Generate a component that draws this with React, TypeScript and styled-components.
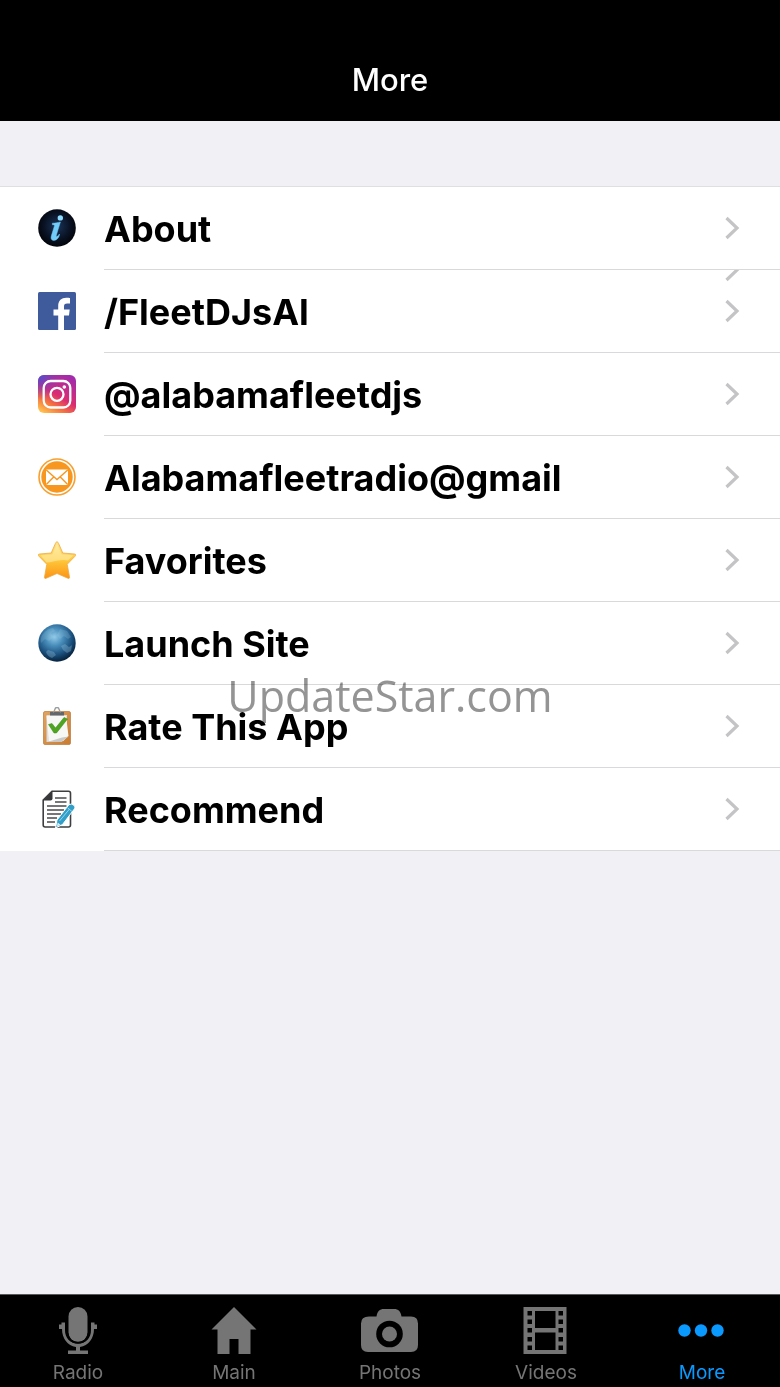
import React from "react";
import styled, { createGlobalStyle } from "styled-components";

const GlobalStyle = createGlobalStyle`
  *, *::before, *::after { box-sizing: border-box; }
  body {
    margin: 0;
    background: #f0f0f5;
    font-family: Inter, "Liberation Sans", sans-serif;
  }
`;

const Screen = styled.div`
  position: relative;
  display: flex;
  flex-direction: column;
  min-height: 100vh;
  background: #f0f0f5;
`;

const Header = styled.header`
  display: flex;
  justify-content: center;
  padding: 60px 16px 21px;
  background: #000;
`;

const Title = styled.h1`
  margin: 0;
  color: #fff;
  font-size: 31px;
  line-height: 40px;
  font-weight: 500;
`;

const Content = styled.main`
  flex: 1;
  padding-top: 65px;
`;

const Menu = styled.ul`
  margin: 0;
  padding: 0;
  list-style: none;
  background: #fff;
  border-top: 1px solid #dfdfe2;
`;

const Row = styled.li`
  position: relative;
`;

const RowLink = styled.a`
  display: flex;
  align-items: stretch;
  gap: 28px;
  height: 83px;
  padding-left: 38px;
  color: #000;
  text-decoration: none;
`;

const RowIcon = styled.svg`
  flex: none;
  margin-top: 22px;
  width: 38px;
  height: 38px;
`;

const RowBody = styled.span`
  display: flex;
  flex: 1;
  align-items: center;
  justify-content: space-between;
  min-width: 0;
  padding-right: 40px;
  border-bottom: 1px solid #d9d9db;
`;

const RowLabel = styled.span`
  padding-top: 2px;
  font-size: 36px;
  line-height: 48px;
  font-weight: 700;
`;

const ChevronIcon = styled.svg`
  flex: none;
  width: 16px;
  height: 24px;
`;

const Leftover = styled.span`
  position: absolute;
  top: 0;
  right: 40px;
  height: 12px;
  overflow: hidden;
  display: flex;
  align-items: flex-end;
`;

const TabBar = styled.nav`
  display: grid;
  grid-template-columns: repeat(5, 1fr);
  border-top: 1px solid #58585a;
  background: #000;
`;

const Tab = styled.a<{ $active?: boolean }>`
  display: flex;
  flex-direction: column;
  align-items: center;
  gap: 5px;
  height: 92px;
  padding-top: 11px;
  color: ${(p) => (p.$active ? "#0a99ff" : "#757575")};
  font-size: 19px;
  line-height: 24px;
  text-decoration: none;
`;

const TabIcon = styled.svg`
  width: 60px;
  height: 50px;
  fill: currentColor;
`;

const Watermark = styled.div`
  position: absolute;
  inset: 0;
  display: flex;
  align-items: center;
  justify-content: center;
  padding-top: 4px;
  color: #949494;
  font-family: "Open Sans", "Noto Sans", sans-serif;
  font-size: 43px;
  line-height: 60px;
  mix-blend-mode: multiply;
  pointer-events: none;
`;

const Chevron = () => (
  <ChevronIcon viewBox="0 0 16 24" aria-hidden="true">
    <path d="M2.5 2L13 12L2.5 22" fill="none" stroke="#c4c4c6" strokeWidth="3.2" />
  </ChevronIcon>
);

const AboutArt = () => (
  <>
    <defs>
      <radialGradient id="about" cx=".5" cy=".45" r=".55">
        <stop offset="0" stopColor="#1b3358" />
        <stop offset=".6" stopColor="#0a1426" />
        <stop offset="1" stopColor="#020408" />
      </radialGradient>
    </defs>
    <circle cx="19" cy="19" r="18.8" fill="url(#about)" />
    <ellipse cx="22.3" cy="8.9" rx="2.7" ry="2.7" fill="#8bdcff" />
    <path
      d="M14.4 14.2C17 14.5 19.500 13.500 22.400 13C21 17.500 19.300 23 18 27.400C19 27.800 20.500 26.500 21.500 25C21.500 28.500 18.500 31.500 15.800 31.400C12.600 31.300 12.800 28.500 13.600 26L16.600 16.400C16.200 15.700 15.300 15.700 14.400 15.800Z"
      fill="#72ccfa"
      stroke="#72ccfa"
      strokeWidth=".5"
    />
  </>
);

const FacebookArt = () => (
  <>
    <rect width="38" height="38" rx="1.5" fill="#3f5b9c" />
    <path
      d="M20.200 38V23.500H15.500V17.500H20.200V14C20.200 8.600 23.500 5.800 28.300 5.800C30 5.800 31.300 5.900 32 6V11.500H29.200C26.700 11.500 26 12.700 26 14.700V17.500H31.700L31 23.500H26V38Z"
      fill="#fff"
    />
  </>
);

const InstagramArt = () => (
  <>
    <defs>
      <linearGradient id="igBase" x1=".15" y1="1" x2=".75" y2="0">
        <stop offset="0" stopColor="#ffc24f" />
        <stop offset=".25" stopColor="#f5753f" />
        <stop offset=".5" stopColor="#db2c70" />
        <stop offset="1" stopColor="#a22cab" />
      </linearGradient>
      <radialGradient id="igBlue" cx="0" cy="0" r=".65">
        <stop offset="0" stopColor="#3f55d4" />
        <stop offset="1" stopColor="#7a35c8" stopOpacity="0" />
      </radialGradient>
    </defs>
    <rect width="38" height="38" rx="6" fill="url(#igBase)" />
    <rect width="38" height="38" rx="6" fill="url(#igBlue)" />
    <g fill="none" stroke="#fff" strokeWidth="2.300">
      <rect x="5.700" y="6" width="26.600" height="26.500" rx="7" />
      <circle cx="19" cy="19.300" r="6.500" />
    </g>
    <circle cx="26.300" cy="12" r="1.800" fill="#fff" />
  </>
);

const MailArt = () => (
  <>
    <circle cx="19" cy="19" r="18" fill="#fff" stroke="#f7a02f" strokeWidth="1.600" />
    <circle cx="19" cy="19" r="15.700" fill="#f7971f" />
    <rect x="8" y="11.500" width="22" height="15.500" rx="1" fill="#fff" />
    <path
      d="M8.300 12L19 21.500L29.700 12M8.300 26.500L15.700 19M29.700 26.500L22.300 19"
      fill="none"
      stroke="#f7971f"
      strokeWidth="1.400"
    />
  </>
);

const StarArt = () => (
  <>
    <defs>
      <linearGradient id="star" x1="0" y1="0" x2="0" y2="1">
        <stop offset="0" stopColor="#ffe58c" />
        <stop offset=".5" stopColor="#ffc83b" />
        <stop offset="1" stopColor="#fb9314" />
      </linearGradient>
    </defs>
    <path
      d="M19 .8C19.700 .8 20.200 1.500 20.600 2.500L24.800 12L36.500 13C38 13.200 38 14.300 37 15.300L29.200 23.300L31.500 36C31.700 37.400 30.900 37.800 29.800 37.200L19 32.500L8.200 37.200C7.100 37.800 6.300 37.400 6.500 36L8.800 23.300L1 15.300C0 14.300 0 13.200 1.500 13L13.200 12L17.400 2.500C17.800 1.500 18.300 .8 19 .8Z"
      fill="url(#star)"
      stroke="#edaa43"
      strokeWidth=".8"
    />
    <path
      d="M19 2.500L23.700 13.200L35.500 14.300L30 19.500C22 17.500 14 21.500 8.500 21.500L2.500 14.300L14.300 13.200Z"
      fill="#fff4bd"
      opacity=".5"
    />
  </>
);

const GlobeArt = () => (
  <>
    <defs>
      <radialGradient id="globe" cx=".43" cy=".34" r=".65">
        <stop offset="0" stopColor="#93cbe9" />
        <stop offset=".35" stopColor="#4a8fbc" />
        <stop offset=".72" stopColor="#1c5280" />
        <stop offset="1" stopColor="#082541" />
      </radialGradient>
    </defs>
    <circle cx="19" cy="19" r="18.700" fill="url(#globe)" />
    <path
      d="M5 10C8 6 12 4 15 4L17 7L13 9L15 13L11 17L7 15L3 19C2 16 3 12 5 10ZM22 5L29 7L33 13L30 15L26 12L22 15L19 11Z"
      fill="#b5ddee"
      opacity=".18"
    />
    <path
      d="M10 26L16 28L18 31L14 34C11 33 9 31 8 28ZM23 22L27 20L31 23L34 21L33 27L29 29L25 26Z"
      fill="#9ac8df"
      opacity=".32"
    />
  </>
);

const ClipboardArt = () => (
  <>
    <defs>
      <linearGradient id="board" x1="0" y1="0" x2="1" y2="1">
        <stop offset="0" stopColor="#e1a45f" />
        <stop offset="1" stopColor="#c97b31" />
      </linearGradient>
    </defs>
    <rect x="5.500" y="4.500" width="27" height="33" rx="1.500" fill="url(#board)" stroke="#b9793b" strokeWidth=".7" />
    <path d="M8.500 8H29L28.500 30L25.500 34L8.500 35Z" fill="#dededd" />
    <path d="M8.500 9L28 9L30.500 29L24 34.500L11 34Z" fill="#f7f7f6" />
    <path d="M11 34.500L23 35L30.500 29.500L24 30.500Z" fill="#c9c9c7" />
    <path d="M12 5H26V8.500H12Z" fill="#63676a" />
    <path d="M15 5C16.500 5 16.500 3.500 17 2C17.500 0 20.500 0 21 2C21.500 3.500 21.500 5 23 5" fill="none" stroke="#9b9fa2" strokeWidth="1.500" />
    <path d="M10.500 17.500L14 16.500L17.500 21L26 10.500L29.500 12L18.500 26H16Z" fill="#4fa51f" stroke="#39851a" strokeWidth=".5" />
  </>
);

const NoteArt = () => (
  <>
    <path
      d="M14 1.200H30.500Q32.500 1.200 32.500 3.200V35Q32.500 37 30.500 37H7.200Q5.200 37 5.200 35V10Z"
      fill="#fff"
      stroke="#3f3f41"
      strokeWidth="1.600"
    />
    <path d="M5 10.500L14.500 .8V8.500Q14.500 10.500 12.500 10.500Z" fill="#37373a" />
    <path
      d="M17 8H28.500M17 12H28.500M9 16H28.500M9 20H26M9 24H23M9 28H19M9 32H17"
      stroke="#4b4b4d"
      strokeWidth="1.500"
    />
    <path d="M17.500 38L19 30L31 14.500Q33.500 13 36.500 15.700Q37.500 17 36.500 18.800L24.500 34.500Z" fill="#329fc9" stroke="#fff" strokeWidth="1" />
    <path d="M18.800 36.800L19.700 32.500L22.500 34.800Z" fill="#d9eff7" />
    <path d="M29.500 17.700L34 21.500M21.500 31L31.500 19" stroke="#96d2e8" strokeWidth="1" />
  </>
);

const MicArt = () => (
  <>
    <rect x="20.500" y="1" width="19" height="35" rx="9.500" />
    <path d="M11 18.500H13.500V16.500H17V24C17 32 22 37.500 30 37.500S43 32 43 24V16.500H46.500V18.500H49V23H46C46 32.500 40.500 39.500 32 41V44.500H40V48H20V44.500H28V41C19.500 39.500 14 32.500 14 23H11Z" />
    <path d="M18.700 16.500V24C18.700 31 23 36.800 30 36.800S41.300 31 41.300 24V16.500" fill="none" stroke="#000" strokeWidth="2" />
  </>
);

const HomeArt = () => (
  <path d="M30 1L52.500 23.500H46.500V48H34.500V33H25.500V48H13.500V23.500H7.500Z" />
);

const CameraArt = () => (
  <>
    <path d="M9 10.500H16.500C17.500 5 19.500 3 24 3H34C38.500 3 40.500 5 41.500 10.500H51Q58 10.500 58 17.500V39Q58 46 51 46H8Q1 46 1 39V17.500Q1 10.500 9 10.500Z" />
    <circle cx="29.500" cy="28" r="13.300" fill="#000" />
    <circle cx="29.500" cy="28" r="7.500" />
  </>
);

const FilmArt = () => (
  <path
    fillRule="evenodd"
    d="M7.500 1H50.500V48H7.500ZM19 5V22H39.500V5ZM19 26.500V44H39.500V26.500ZM11.500 5V9.500H16V5ZM11.500 13.500V18H16V13.500ZM11.500 22V26.500H16V22ZM11.500 31V35.500H16V31ZM11.500 39.500V44H16V39.500ZM42.500 5V9.500H47V5ZM42.500 13.500V18H47V13.500ZM42.500 22V26.500H47V22ZM42.500 31V35.500H47V31ZM42.500 39.500V44H47V39.500Z"
  />
);

const MoreArt = () => (
  <>
    <circle cx="12.500" cy="24.500" r="6.200" />
    <circle cx="29" cy="24.500" r="6.200" />
    <circle cx="45.500" cy="24.500" r="6.200" />
  </>
);

const items = [
  { label: "About", Art: AboutArt },
  { label: "/FleetDJsAl", Art: FacebookArt, leftover: true },
  { label: "@alabamafleetdjs", Art: InstagramArt },
  { label: "Alabamafleetradio@gmail", Art: MailArt },
  { label: "Favorites", Art: StarArt },
  { label: "Launch Site", Art: GlobeArt },
  { label: "Rate This App", Art: ClipboardArt },
  { label: "Recommend", Art: NoteArt },
];

const tabs = [
  { label: "Radio", Art: MicArt },
  { label: "Main", Art: HomeArt },
  { label: "Photos", Art: CameraArt },
  { label: "Videos", Art: FilmArt },
  { label: "More", Art: MoreArt, active: true },
];

export default function App() {
  return (
    <>
      <GlobalStyle />
      <Screen>
        <Header>
          <Title>More</Title>
        </Header>
        <Content>
          <Menu>
            {items.map(({ label, Art, leftover }) => (
              <Row key={label}>
                {leftover && (
                  <Leftover>
                    <Chevron />
                  </Leftover>
                )}
                <RowLink href="#">
                  <RowIcon viewBox="0 0 38 38" aria-hidden="true">
                    <Art />
                  </RowIcon>
                  <RowBody>
                    <RowLabel>{label}</RowLabel>
                    <Chevron />
                  </RowBody>
                </RowLink>
              </Row>
            ))}
          </Menu>
        </Content>
        <TabBar>
          {tabs.map(({ label, Art, active }) => (
            <Tab key={label} href="#" $active={active} aria-current={active ? "page" : undefined}>
              <TabIcon viewBox="0 0 60 50" aria-hidden="true">
                <Art />
              </TabIcon>
              {label}
            </Tab>
          ))}
        </TabBar>
        <Watermark>UpdateStar.com</Watermark>
      </Screen>
    </>
  );
}
